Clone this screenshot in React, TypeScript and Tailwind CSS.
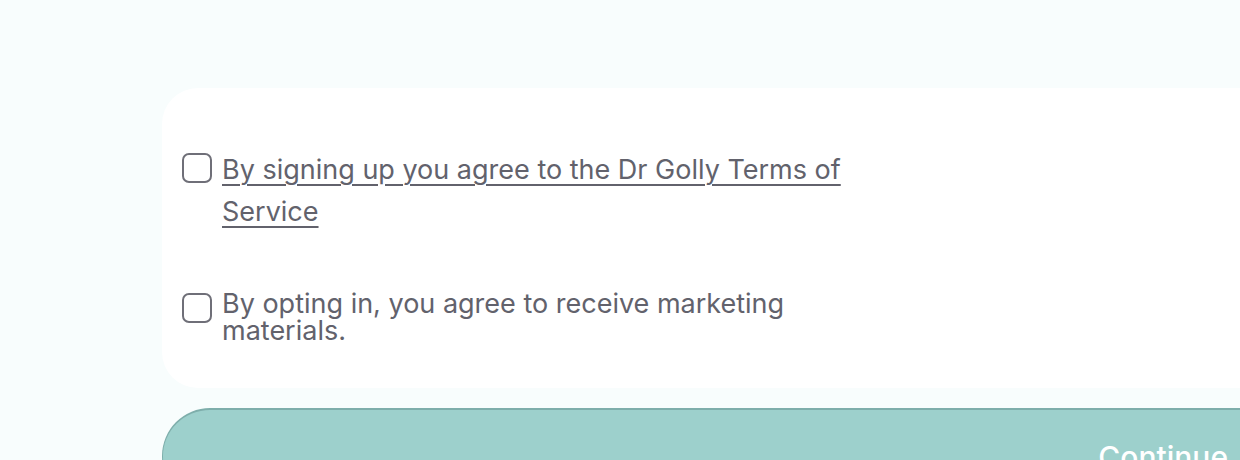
export default function App() {
  return (
    <div className="w-[1240px] h-[460px] overflow-hidden bg-[#f8fdfd] font-['Inter',sans-serif] text-[#62626c]">
      <div className="ml-[162px] pt-[88px] w-[1140px] flex flex-col gap-[20px]">
        <div className="bg-white rounded-[36px] pl-[20px] pt-[61px] pb-[44px] flex flex-col gap-[57px]">
          <label className="flex items-start gap-[10px]">
            <span className="mt-[4px] w-[30px] h-[30px] shrink-0 rounded-[7px] border-2 border-[#6f6f78] bg-white" />
            <span className="w-[640px] text-[27px] leading-[42px] underline underline-offset-[5px] decoration-[1.5px]">
              By signing up you agree to the Dr Golly Terms of Service
            </span>
          </label>
          <label className="flex items-start gap-[10px]">
            <span className="mt-[3px] w-[30px] h-[30px] shrink-0 rounded-[7px] border-2 border-[#6f6f78] bg-white" />
            <span className="w-[640px] text-[27px] leading-[27px]">
              By opting in, you agree to receive marketing materials.
            </span>
          </label>
        </div>
        <button className="h-[96px] rounded-[50px] bg-[#9dd0cc] border-t-2 border-l border-[#7eaeab] flex justify-end items-center pr-[74px] text-white text-[30px] font-medium">
          Continue
        </button>
      </div>
    </div>
  );
}
